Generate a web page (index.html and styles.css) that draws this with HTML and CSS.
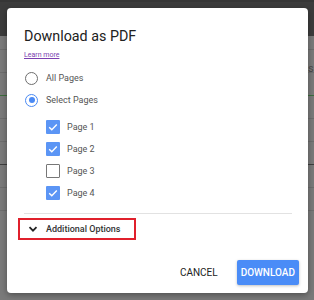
FILE: index.html
```html
<!DOCTYPE html>
<html>
  <head>
    <title>Download as PDF</title>
    <link rel="stylesheet" href="styles.css">
  </head>
  <body>
    <div class="page">
      <div class="topbar"></div>
      <div class="sheet">
        <div class="row"></div>
        <div class="row"></div>
        <div class="row green"></div>
        <div class="row"></div>
        <div class="row"></div>
        <div class="row dark"></div>
        <div class="row"></div>
        <div class="row"></div>
      </div>
      <span class="peek">s</span>
    </div>

    <div class="dialog">
      <div class="title">Download as PDF</div>
      <a class="learn" href="#">Learn more</a>

      <div class="radio-list">
        <div class="radio-item">
          <span class="radio"></span>
          <span>All Pages</span>
        </div>
        <div class="radio-item">
          <span class="radio checked"></span>
          <span>Select Pages</span>
        </div>
      </div>

      <div class="check-list">
        <div class="check-item">
          <span class="box checked"><svg viewBox="0 0 14 14"><path d="M3.2 7.2l2.6 2.6 5-5.2"/></svg></span>
          <span>Page 1</span>
        </div>
        <div class="check-item">
          <span class="box checked"><svg viewBox="0 0 14 14"><path d="M3.2 7.2l2.6 2.6 5-5.2"/></svg></span>
          <span>Page 2</span>
        </div>
        <div class="check-item">
          <span class="box"></span>
          <span>Page 3</span>
        </div>
        <div class="check-item">
          <span class="box checked"><svg viewBox="0 0 14 14"><path d="M3.2 7.2l2.6 2.6 5-5.2"/></svg></span>
          <span>Page 4</span>
        </div>
      </div>

      <div class="divider"></div>

      <div class="more">
        <svg class="chev" viewBox="0 0 10 10"><path d="M1.5 3.2l3.5 3.5 3.5-3.5"/></svg>
        <span>Additional Options</span>
      </div>

      <div class="actions">
        <button class="btn-flat">CANCEL</button>
        <button class="btn-primary">DOWNLOAD</button>
      </div>
    </div>
  </body>
</html>
```

FILE: styles.css
```css
body {
  margin: 0;
  font-family: Roboto, "Liberation Sans", sans-serif;
  background: #7a7a7a;
  width: 314px;
  height: 300px;
  overflow: hidden;
  position: relative;
}
.page {
  height: 300px;
}
.topbar {
  height: 36px;
  background: #3c3c3c;
  border-top: 2px solid #363636;
  box-sizing: border-box;
}
.sheet {
  display: flex;
  flex-direction: column;
}
.row {
  height: 22px;
  border-bottom: 1px solid #6d6d6d;
}
.row:first-child {
  height: 13px;
}
.row.green {
  border-bottom-color: #3d6e3d;
}
.row.dark {
  border-bottom-color: #3e3e3e;
}
.peek {
  position: absolute;
  left: 308px;
  top: 62px;
  font-size: 11px;
  color: #4a4a4a;
}

.dialog {
  position: absolute;
  left: 7px;
  top: 8px;
  width: 301px;
  height: 285px;
  background: #fff;
  border-radius: 4px;
  box-shadow: 0 2px 6px rgba(0, 0, 0, 0.35);
  box-sizing: border-box;
  padding: 18px 16px 0 17px;
  display: flex;
  flex-direction: column;
}
.title {
  font-size: 14.3px;
  line-height: 20px;
  color: #212121;
}
.learn {
  font-size: 7px;
  line-height: 10px;
  color: #7b3fb0;
  margin-top: 4px;
  align-self: flex-start;
}

.radio-list {
  margin-top: 7px;
}
.radio-item {
  display: flex;
  align-items: center;
  height: 22px;
  font-size: 9px;
  color: #555;
}
.radio {
  width: 13px;
  height: 13px;
  border: 1.5px solid #6e6e6e;
  border-radius: 50%;
  box-sizing: border-box;
  margin: 0 8px 0 1px;
  display: flex;
  align-items: center;
  justify-content: center;
}
.radio.checked {
  border-color: #4a8af4;
}
.radio.checked::after {
  content: "";
  width: 6px;
  height: 6px;
  border-radius: 50%;
  background: #4a8af4;
}

.check-list {
  margin-top: 5px;
  padding-left: 22px;
}
.check-item {
  display: flex;
  align-items: center;
  height: 22px;
  font-size: 9px;
  color: #555;
}
.box {
  width: 14px;
  height: 14px;
  box-sizing: border-box;
  border: 1.5px solid #777;
  border-radius: 1px;
  margin-right: 7px;
  display: flex;
}
.box.checked {
  border: none;
  background: #5b95f5;
}
.box svg {
  width: 14px;
  height: 14px;
  fill: none;
  stroke: #fff;
  stroke-width: 1.4;
}

.divider {
  margin-top: 9px;
  height: 1px;
  background: #e2e2e2;
}
.more {
  margin: 4px 0 0 -6px;
  width: 118px;
  height: 22px;
  border: 2px solid #e0202c;
  box-sizing: border-box;
  display: flex;
  align-items: center;
  font-size: 9px;
  font-weight: 500;
  color: #333;
  white-space: nowrap;
}
.chev {
  width: 10px;
  height: 10px;
  fill: none;
  stroke: #222;
  stroke-width: 1.8;
  margin: 0 8px 0 8px;
}

.actions {
  margin: 20px -7px 0 0;
  display: flex;
  justify-content: flex-end;
  align-items: center;
  gap: 19px;
}
.actions button {
  font-family: Roboto, "Liberation Sans", sans-serif;
  font-size: 10px;
  font-weight: 500;
  border: none;
  cursor: pointer;
}
.btn-flat {
  background: none;
  color: #222;
  padding: 0;
  font-weight: 400 !important;
}
.btn-primary {
  background: #4a8cf7;
  color: #fff;
  height: 25px;
  padding: 0 4px;
  border-radius: 2px;
  box-shadow: 0 1px 3px rgba(0, 0, 0, 0.25);
}
```
